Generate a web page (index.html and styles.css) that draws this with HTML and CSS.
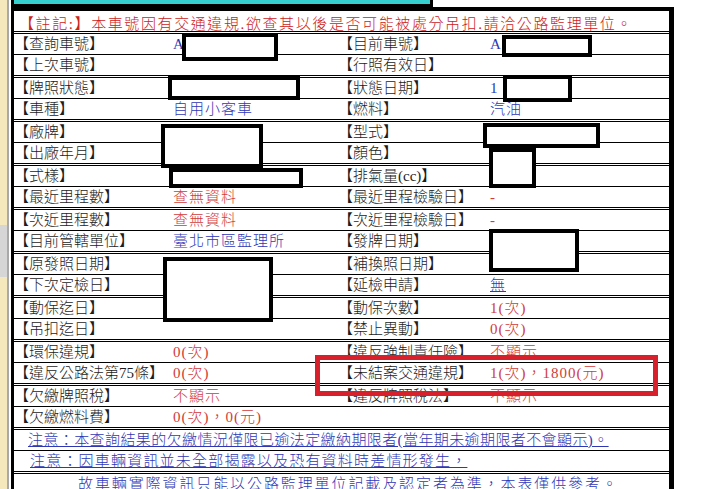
FILE: index.html
```html
<!DOCTYPE html>
<html lang="zh-Hant">
<head>
<meta charset="utf-8">
<title>車籍查詢</title>
<link rel="stylesheet" href="styles.css">
</head>
<body>
<div class="screen">
  <div class="side"><div class="side-thumb"></div></div>
  <div class="page">
    <div class="cap"></div>
    <div class="sheet">
      <div class="note d">【註記:】本車號因有交通違規.欲查其以後是否可能被處分吊扣.請洽公路監理單位。</div>
      <div class="row s"><span class="lab">【查詢車號】</span><span class="val blue">A</span><span class="lab">【目前車號】</span><span class="val blue">A</span></div>
      <div class="row d"><span class="lab">【上次車號】</span><span class="val"></span><span class="lab">【行照有效日】</span><span class="val"></span></div>
      <div class="row s"><span class="lab">【牌照狀態】</span><span class="val"></span><span class="lab">【狀態日期】</span><span class="val blue">1</span></div>
      <div class="row d"><span class="lab">【車種】</span><span class="val blue">自用小客車</span><span class="lab">【燃料】</span><span class="val blue">汽油</span></div>
      <div class="row s"><span class="lab">【廠牌】</span><span class="val"></span><span class="lab">【型式】</span><span class="val"></span></div>
      <div class="row d"><span class="lab">【出廠年月】</span><span class="val"></span><span class="lab">【顏色】</span><span class="val"></span></div>
      <div class="row s"><span class="lab">【式樣】</span><span class="val"></span><span class="lab">【排氣量(cc)】</span><span class="val"></span></div>
      <div class="row d"><span class="lab">【最近里程數】</span><span class="val red">查無資料</span><span class="lab">【最近里程檢驗日】</span><span class="val red">-</span></div>
      <div class="row s"><span class="lab">【次近里程數】</span><span class="val red">查無資料</span><span class="lab">【次近里程檢驗日】</span><span class="val red">-</span></div>
      <div class="row d"><span class="lab">【目前管轄單位】</span><span class="val blue">臺北市區監理所</span><span class="lab">【發牌日期】</span><span class="val"></span></div>
      <div class="row s"><span class="lab">【原發照日期】</span><span class="val"></span><span class="lab">【補換照日期】</span><span class="val"></span></div>
      <div class="row d"><span class="lab">【下次定檢日】</span><span class="val"></span><span class="lab">【延檢申請】</span><span class="val blue link">無</span></div>
      <div class="row s"><span class="lab">【動保迄日】</span><span class="val"></span><span class="lab">【動保次數】</span><span class="val red">1(次)</span></div>
      <div class="row d"><span class="lab">【吊扣迄日】</span><span class="val"></span><span class="lab">【禁止異動】</span><span class="val red">0(次)</span></div>
      <div class="row s"><span class="lab">【環保違規】</span><span class="val red">0(次)</span><span class="lab">【違反強制責任險】</span><span class="val red">不顯示</span></div>
      <div class="row d"><span class="lab">【違反公路法第75條】</span><span class="val red">0(次)</span><span class="lab">【未結案交通違規】</span><span class="val red">1(次)，1800(元)</span></div>
      <div class="row s"><span class="lab">【欠繳牌照稅】</span><span class="val red">不顯示</span><span class="lab">【違反牌照稅法】</span><span class="val red">不顯示</span></div>
      <div class="row d"><span class="lab">【欠繳燃料費】</span><span class="val red">0(次)，0(元)</span><span class="lab"></span><span class="val"></span></div>
      <div class="msg s m1"><span class="link blue">注意：本查詢結果的欠繳情況僅限已逾法定繳納期限者(當年期未逾期限者不會顯示)。</span></div>
      <div class="msg d m2"><span class="link blue">注意：因車輛資訊並未全部揭露以及恐有資料時差情形發生，</span></div>
      <div class="msg s m3"><span class="link blue">故車輛實際資訊只能以公路監理單位記載及認定者為準，本表僅供參考。</span></div>
    </div>
    <div class="mask k1"></div>
    <div class="mask k2"></div>
    <div class="mask k3"></div>
    <div class="mask k4"></div>
    <div class="mask k5"></div>
    <div class="mask k6"></div>
    <div class="mask k7"></div>
    <div class="mask k8"></div>
    <div class="mask k9"></div>
    <div class="mask k10"></div>
    <div class="mark"></div>
  </div>
</div>
</body>
</html>
```

FILE: styles.css
```css
html, body {
  margin: 0;
  padding: 0;
  background: #ffffff;
  overflow: hidden;
}

.screen {
  display: flex;
  align-items: flex-start;
  height: 489px;
  overflow: hidden;
}

.side {
  width: 7px;
  height: 489px;
  background: #f5e8bd;
  border-right: 2px solid #a9a9a9;
  margin-right: 2px;
  flex: none;
  display: flex;
  flex-direction: column;
}

.side-thumb {
  margin-top: 225px;
  height: 52px;
  background: #d6d6d6;
}

.page {
  position: relative;
  width: 663px;
  flex: none;
  font-family: "Liberation Serif", "Noto Sans CJK TC", serif;
  font-size: 15px;
  font-weight: 300;
  color: #1c1c1c;
}

.cap {
  width: 416px;
  height: 4px;
  background: #36cfd0;
  border: 3px solid #000;
  border-top: 0;
}

.sheet {
  border-top: 4px solid #000;
  border-left: 3px solid #000;
  border-right: 5px solid #000;
}

.s { border-bottom: 1px solid #000; }
.d { border-bottom: 3px double #000; }

.note {
  height: 20px;
  line-height: 27px;
  padding-left: 5px;
  color: #cc2222;
  letter-spacing: 1.6px;
  white-space: nowrap;
  overflow: visible;
}

.row {
  display: grid;
  grid-template-columns: 159px 165px 152px 1fr;
  height: 20px;
  line-height: 20px;
  white-space: nowrap;
}

.lab { overflow: visible; }
.val { letter-spacing: 1px; }

.blue { color: #2f37b5; }
.red { color: #d23a3a; }
.link { text-decoration: underline; }

.msg {
  height: 20px;
  line-height: 20px;
  white-space: nowrap;
}
.m1 { padding-left: 14px; letter-spacing: 0.4px; }
.m2 { padding-left: 16px; letter-spacing: 1.2px; }
.m3 { padding-left: 64px; letter-spacing: 1.9px; }

.mask {
  position: absolute;
  border: 4px solid #000;
  background: #fff;
  box-sizing: border-box;
}
.k1 { left: 171px; top: 33px; width: 96px; height: 28px; }
.k2 { left: 157px; top: 76px; width: 132px; height: 24px; }
.k3 { left: 491px; top: 35px; width: 90px; height: 22px; }
.k4 { left: 492px; top: 75px; width: 69px; height: 27px; }
.k5 { left: 150px; top: 124px; width: 102px; height: 44px; }
.k6 { left: 158px; top: 168px; width: 134px; height: 20px; }
.k7 { left: 472px; top: 123px; width: 117px; height: 25px; }
.k8 { left: 478px; top: 148px; width: 47px; height: 40px; }
.k9 { left: 478px; top: 229px; width: 90px; height: 43px; }
.k10 { left: 152px; top: 257px; width: 110px; height: 65px; }

.mark {
  position: absolute;
  left: 304px;
  top: 355px;
  width: 343px;
  height: 41px;
  border: 5px solid #d8202c;
  box-sizing: border-box;
}
```
